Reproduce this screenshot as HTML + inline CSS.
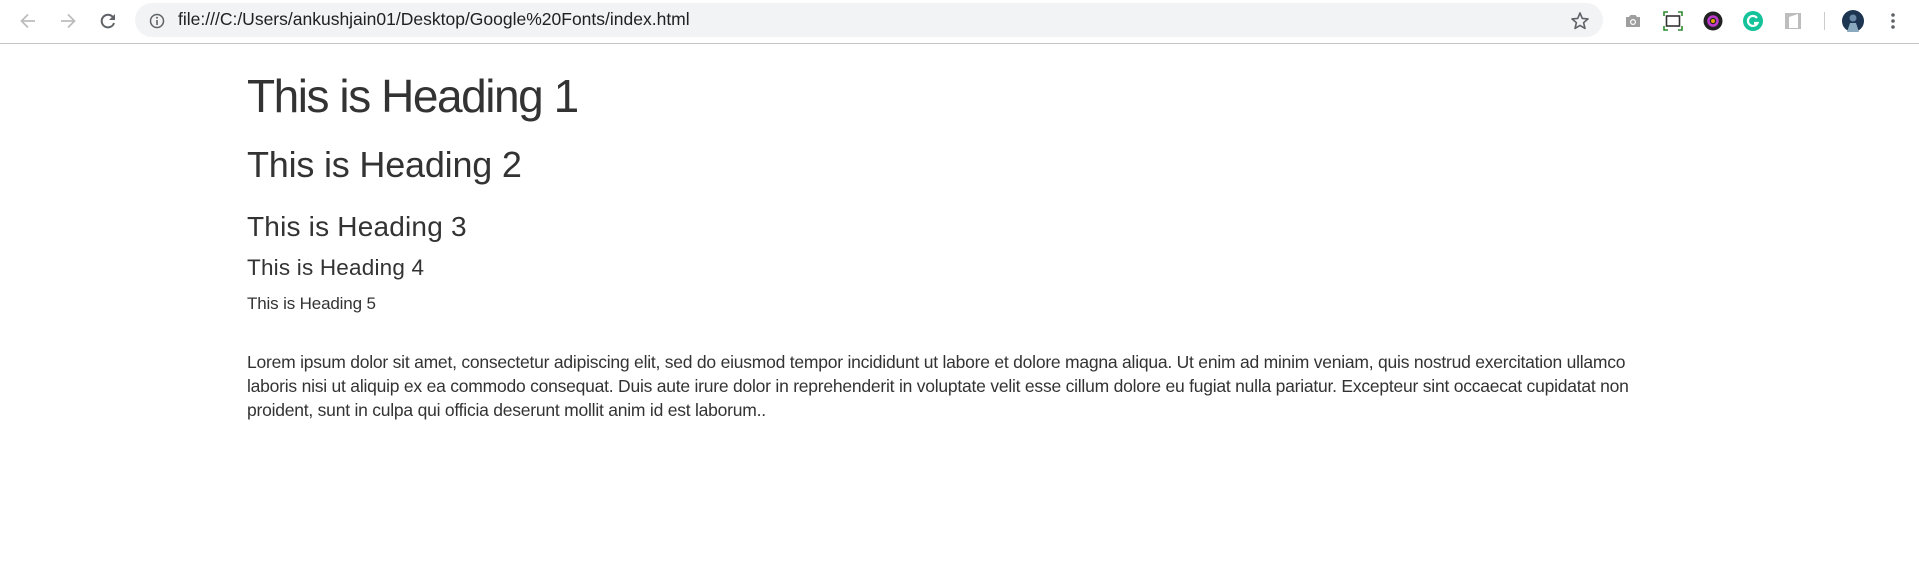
<!DOCTYPE html>
<html><head><meta charset="utf-8"><style>
*{margin:0;padding:0;box-sizing:border-box}
html,body{width:1919px;height:561px;background:#fff;overflow:hidden;font-family:"Liberation Sans",Arial,sans-serif;color:#333}
.bar{position:absolute;left:0;top:0;width:1919px;height:44px;background:#fff;border-bottom:1px solid #c6c6c6}
.omni{position:absolute;left:135px;top:3px;width:1468px;height:34px;background:#f1f3f4;border-radius:17px}
.url{position:absolute;left:178px;top:9px;font-size:17.5px;color:#202124;white-space:nowrap}
.ic{position:absolute}
.t{position:absolute;left:247px;white-space:nowrap;color:#333}
</style></head><body>
<div class="bar">
<div class="omni"></div>
<svg class="ic" style="left:18px;top:11px" width="20" height="20" viewBox="0 0 20 20"><path d="M17 10H4M10 3.5L3.5 10 10 16.5" fill="none" stroke="#bdbdbd" stroke-width="1.8"/></svg>
<svg class="ic" style="left:58px;top:11px" width="20" height="20" viewBox="0 0 20 20"><path d="M3 10h13M10 3.5l6.5 6.5-6.5 6.5" fill="none" stroke="#bdbdbd" stroke-width="1.8"/></svg>
<svg class="ic" style="left:98px;top:11px" width="20" height="20" viewBox="0 0 20 20"><path d="M15.5 7A6.3 6.3 0 1 0 16 12" fill="none" stroke="#5f6368" stroke-width="2"/><path d="M17 3v6h-6z" fill="#5f6368"/></svg>
<svg class="ic" style="left:149px;top:13px" width="16" height="16" viewBox="0 0 16 16"><circle cx="8" cy="8" r="6.5" fill="none" stroke="#5f6368" stroke-width="1.5"/><path d="M8 7v5" stroke="#5f6368" stroke-width="1.6"/><circle cx="8" cy="4.8" r="1" fill="#5f6368"/></svg>
<div class="url">file:///C:/Users/ankushjain01/Desktop/Google%20Fonts/index.html</div>
<svg class="ic" style="left:1570px;top:11px" width="20" height="20" viewBox="0 0 20 20"><path d="M10 2l2.3 5.4 5.7.5-4.4 3.8 1.4 5.7L10 14.4l-5 3 1.4-5.7L2 7.9l5.7-.5z" fill="none" stroke="#5f6368" stroke-width="1.6" stroke-linejoin="round"/></svg>
<svg class="ic" style="left:1623px;top:11px" width="20" height="20" viewBox="0 0 20 20"><path d="M3 6h3l1.5-2h5L14 6h3v10H3z" fill="#9e9e9e"/><circle cx="10" cy="11" r="3" fill="#fff"/><circle cx="10" cy="11" r="1.8" fill="#9e9e9e"/></svg>
<svg class="ic" style="left:1663px;top:11px" width="20" height="20" viewBox="0 0 20 20"><rect x="3.5" y="5" width="13" height="10" fill="none" stroke="#333" stroke-width="1.6"/><path d="M1 5V1h4M15 1h4v4M19 15v4h-4M5 19H1v-4" fill="none" stroke="#2e8b2e" stroke-width="1.6"/></svg>
<svg class="ic" style="left:1703px;top:11px" width="20" height="20" viewBox="0 0 20 20"><circle cx="10" cy="10" r="9.5" fill="#222"/><circle cx="10" cy="10" r="4.5" fill="none" stroke="#c03ad0" stroke-width="2.5"/><circle cx="10" cy="10" r="2" fill="#e5a000"/></svg>
<svg class="ic" style="left:1743px;top:11px" width="20" height="20" viewBox="0 0 20 20"><circle cx="10" cy="10" r="10" fill="#15c39a"/><path d="M14 7a5 5 0 1 0 .5 5H11" fill="none" stroke="#fff" stroke-width="2.2"/></svg>
<svg class="ic" style="left:1783px;top:11px" width="20" height="20" viewBox="0 0 20 20"><rect x="2" y="2" width="16" height="16" fill="#bdbdbd"/><path d="M6 6l9-3v14H6z" fill="#fff"/></svg>
<div class="ic" style="left:1824px;top:12px;width:1px;height:18px;background:#ccc"></div>
<svg class="ic" style="left:1842px;top:10px" width="22" height="22" viewBox="0 0 22 22"><circle cx="11" cy="11" r="11" fill="#1d3550"/><circle cx="11" cy="8" r="3.5" fill="#6a8aa8"/><path d="M5 22l3-9h6l3 9z" fill="#8aa9bf"/></svg>
<svg class="ic" style="left:1888px;top:11px" width="10" height="20" viewBox="0 0 10 20"><circle cx="5" cy="4" r="1.8" fill="#5f6368"/><circle cx="5" cy="10" r="1.8" fill="#5f6368"/><circle cx="5" cy="16" r="1.8" fill="#5f6368"/></svg>
</div>

<div class="t" style="top:69px;font-size:46px;letter-spacing:-1.45px;line-height:54px">This is Heading 1</div>
<div class="t" style="top:144px;font-size:36px;letter-spacing:-0.2px;line-height:42px">This is Heading 2</div>
<div class="t" style="top:210px;font-size:28px;letter-spacing:0.2px;line-height:33px">This is Heading 3</div>
<div class="t" style="top:254px;font-size:22.5px;letter-spacing:0.2px;line-height:27px">This is Heading 4</div>
<div class="t" style="top:294px;font-size:17px;letter-spacing:-0.15px;line-height:20px">This is Heading 5</div>

<div class="t" style="top:352px;font-size:17.5px;line-height:20px;letter-spacing:-0.23px">Lorem ipsum dolor sit amet, consectetur adipiscing elit, sed do eiusmod tempor incididunt ut labore et dolore magna aliqua. Ut enim ad minim veniam, quis nostrud exercitation ullamco</div>
<div class="t" style="top:376px;font-size:17.5px;line-height:20px;letter-spacing:-0.23px">laboris nisi ut aliquip ex ea commodo consequat. Duis aute irure dolor in reprehenderit in voluptate velit esse cillum dolore eu fugiat nulla pariatur. Excepteur sint occaecat cupidatat non</div>
<div class="t" style="top:400px;font-size:17.5px;line-height:20px;letter-spacing:-0.23px">proident, sunt in culpa qui officia deserunt mollit anim id est laborum..</div>
</body></html>
